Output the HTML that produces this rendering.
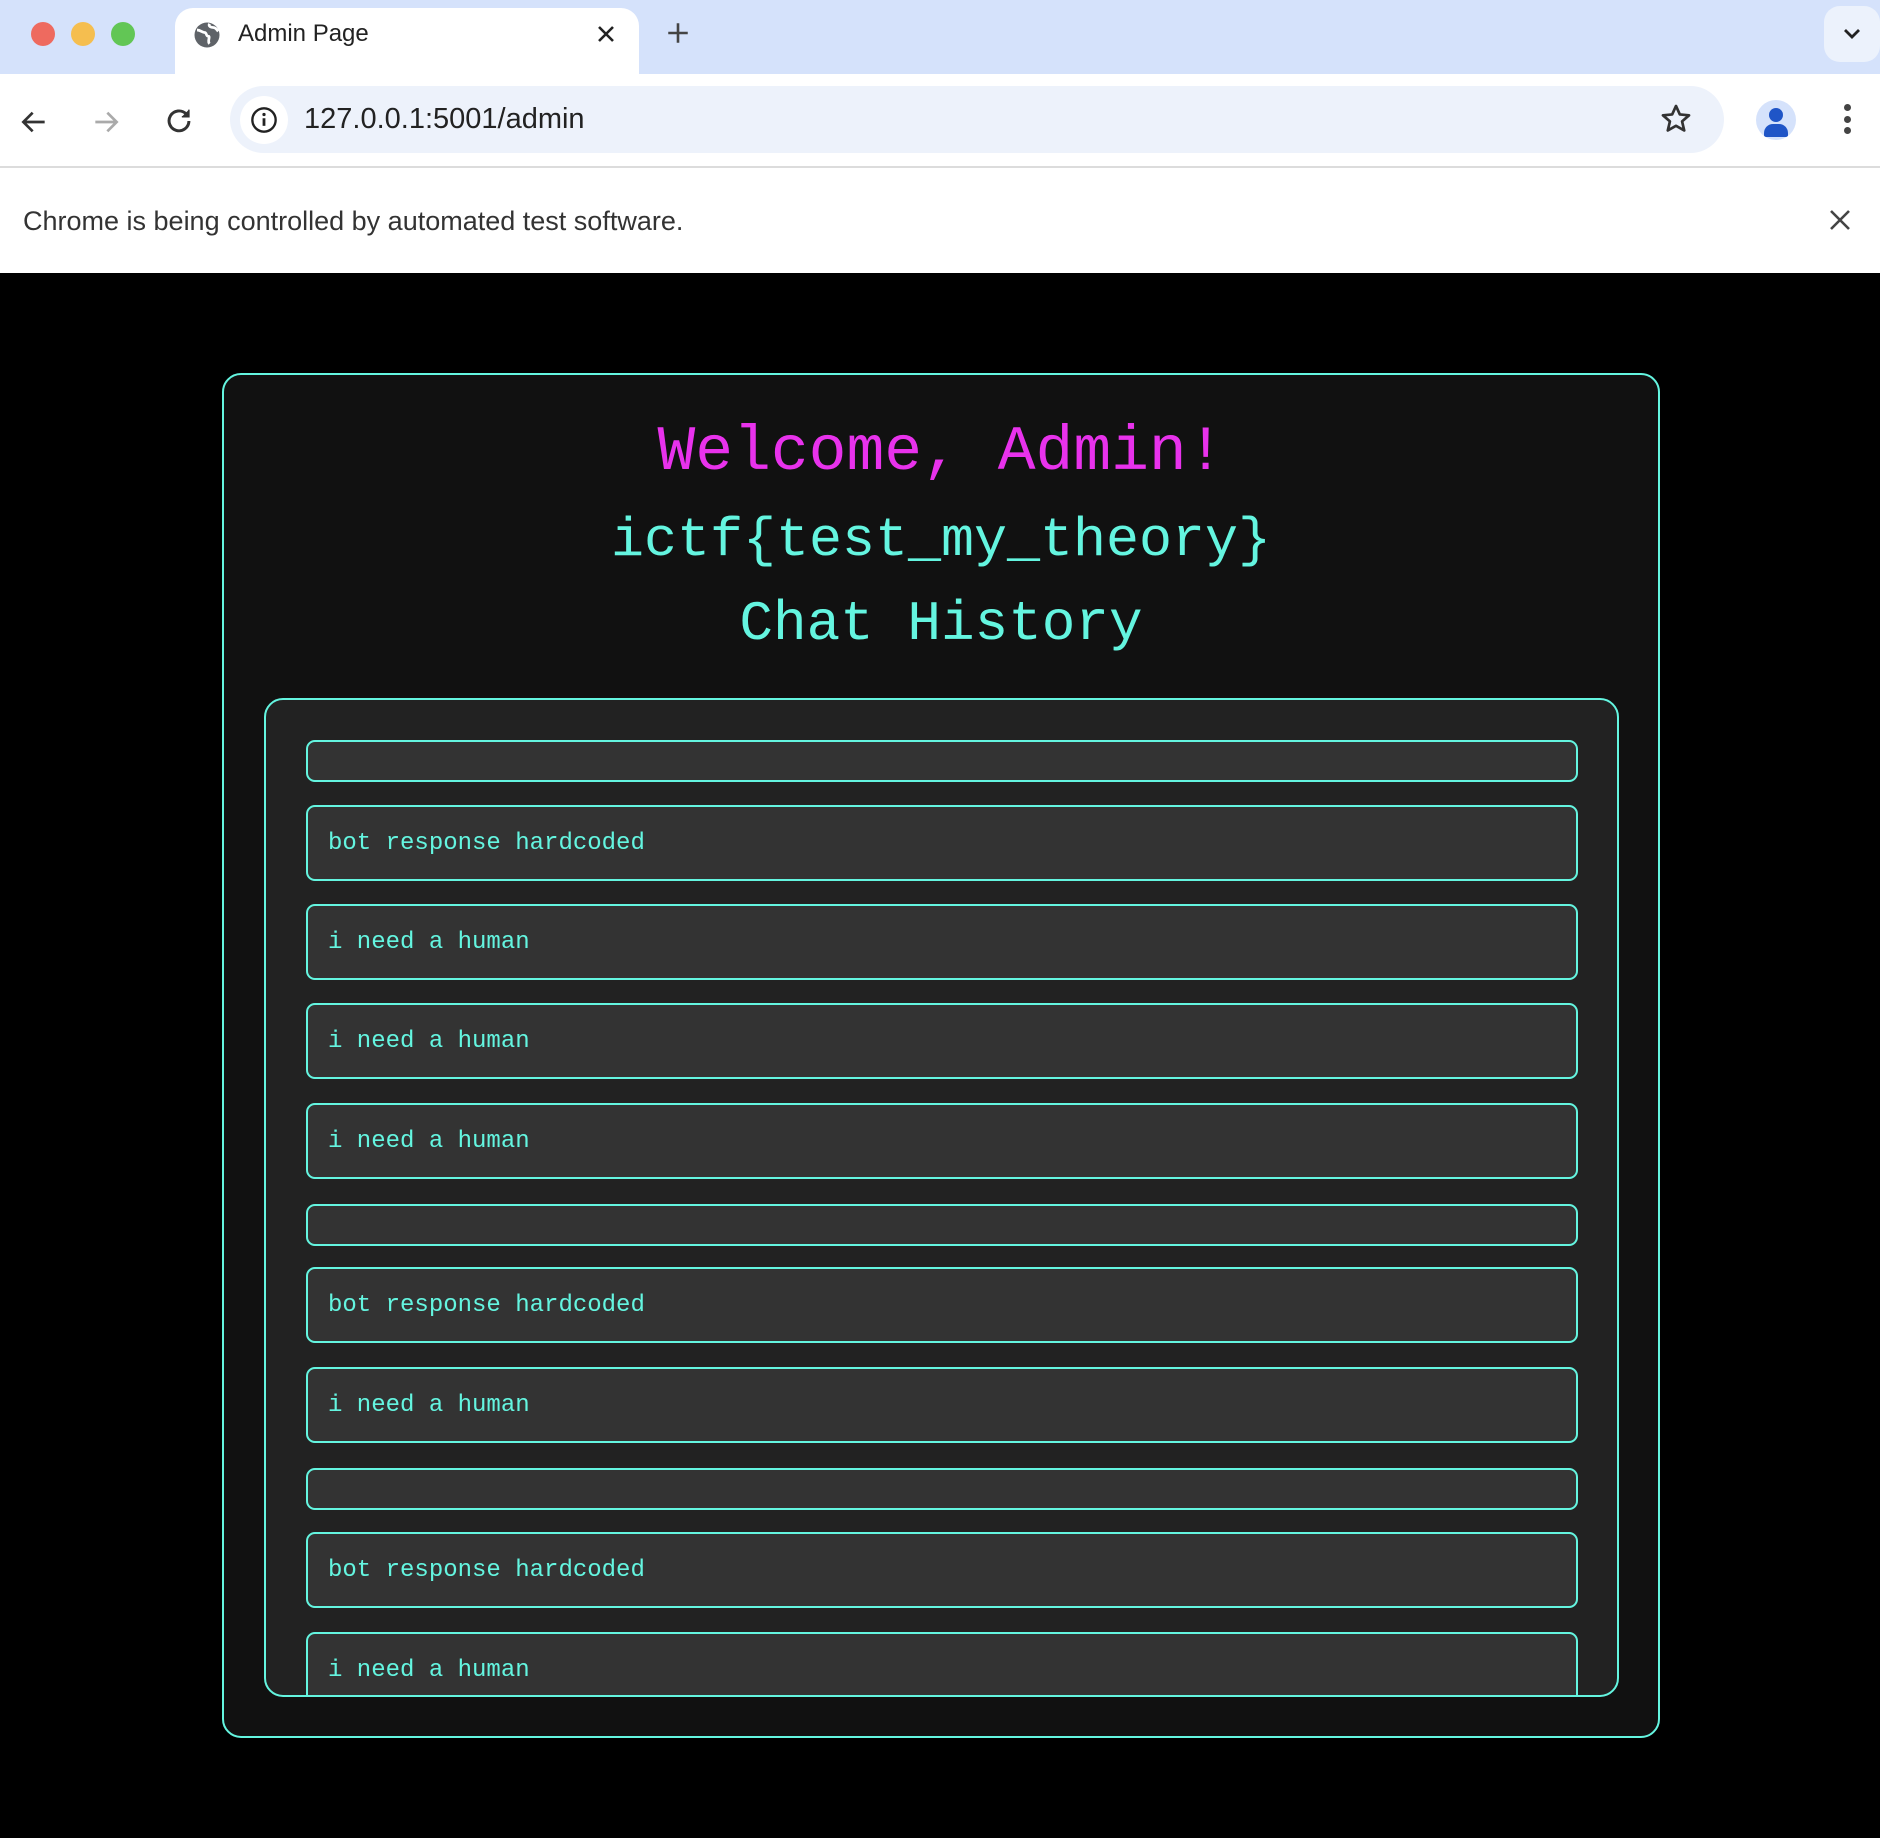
<!DOCTYPE html>
<html><head><meta charset="utf-8"><style>
*{margin:0;padding:0;box-sizing:border-box}
body{width:1880px;height:1838px;background:#000;overflow:hidden;position:relative;font-family:"Liberation Sans",sans-serif}
.abs{position:absolute}
#tabbar{left:0;top:0;width:1880px;height:74px;background:#d5e2fb}
#tab{left:175px;top:8px;width:464px;height:70px;background:#fff;border-radius:18px 18px 0 0}
#toolbar{left:0;top:74px;width:1880px;height:94px;background:#fff;border-bottom:2px solid #dcdcdc}
#url{left:230px;top:86px;width:1494px;height:67px;background:#edf2fb;border-radius:34px}
#info{left:0;top:168px;width:1880px;height:105px;background:#fff}
.cy{color:#64f5e0}
#outer{left:222px;top:373px;width:1438px;height:1365px;background:#111;border:2px solid #64f5e0;border-radius:19px}
h{position:absolute;left:0;width:100%;text-align:center;font-family:"Liberation Mono",monospace;white-space:nowrap}
#inner{left:264px;top:698px;width:1355px;height:999px;background:#222;border:2px solid #64f5e0;border-radius:19px;overflow:hidden}
.m{position:absolute;left:40px;width:1272px;background:#333;border:2px solid #64f5e0;border-radius:9px;font-family:"Liberation Mono",monospace;font-size:24px;color:#64f5e0;padding:0 20px;line-height:74px;height:76px}
.e{height:42px}
</style></head><body>
<div id="tabbar" class="abs"></div>
<div class="abs" style="left:31px;top:22px;width:24px;height:24px;border-radius:50%;background:#ee6a5f"></div>
<div class="abs" style="left:71px;top:22px;width:24px;height:24px;border-radius:50%;background:#f5be4f"></div>
<div class="abs" style="left:111px;top:22px;width:24px;height:24px;border-radius:50%;background:#62c655"></div>
<div id="tab" class="abs"></div>
<svg class="abs" style="left:192px;top:20px" width="30" height="30" viewBox="0 0 24 24"><circle cx="12" cy="12" r="10" fill="#5f6368"/><path d="M4 8c3 0 4 2 6 2s1 3 3 3-1 4 1 6M14 3c-1 2 1 3 3 3s3 2 4 3" stroke="#fff" stroke-width="2.2" fill="none"/></svg>
<div class="abs" style="left:238px;top:20px;font-size:24px;color:#222">Admin Page</div>
<svg class="abs" style="left:594px;top:22px" width="24" height="24" viewBox="0 0 24 24"><path d="M5 5L19 19M19 5L5 19" stroke="#222" stroke-width="2.6"/></svg>
<svg class="abs" style="left:665px;top:20px" width="26" height="26" viewBox="0 0 24 24"><path d="M12 3V21M3 12H21" stroke="#444" stroke-width="2.4"/></svg>
<div class="abs" style="left:1824px;top:6px;width:56px;height:56px;background:#ecf2fc;border-radius:16px"></div>
<svg class="abs" style="left:1840px;top:22px" width="24" height="24" viewBox="0 0 24 24"><path d="M5 8l7 7 7-7" stroke="#222" stroke-width="2.8" fill="none"/></svg>
<div id="toolbar" class="abs"></div>
<svg class="abs" style="left:18px;top:106px" width="32" height="32" viewBox="0 0 24 24"><path d="M20 12H5M11 5l-7 7 7 7" stroke="#333" stroke-width="2" fill="none"/></svg>
<svg class="abs" style="left:90px;top:106px" width="32" height="32" viewBox="0 0 24 24"><path d="M4 12H19M13 5l7 7-7 7" stroke="#aaa" stroke-width="2" fill="none"/></svg>
<svg class="abs" style="left:162px;top:104px" width="34" height="34" viewBox="0 0 24 24"><path d="M19 12a7 7 0 1 1-2-5" stroke="#333" stroke-width="2.1" fill="none"/><path d="M19 4v5h-5" fill="#333" stroke="#333" stroke-width="1"/></svg>
<div id="url" class="abs"></div>
<div class="abs" style="left:240px;top:96px;width:48px;height:48px;border-radius:50%;background:#fff"></div>
<svg class="abs" style="left:250px;top:106px" width="28" height="28" viewBox="0 0 24 24"><circle cx="12" cy="12" r="10" stroke="#222" stroke-width="2" fill="none"/><path d="M12 10.5V17" stroke="#222" stroke-width="2.4"/><circle cx="12" cy="7.3" r="1.4" fill="#222"/></svg>
<div class="abs" style="left:304px;top:103px;font-size:29px;color:#222">127.0.0.1:5001/admin</div>
<svg class="abs" style="left:1659px;top:102px" width="34" height="34" viewBox="0 0 24 24"><path d="M12 2.8l2.7 6 6.5.6-4.9 4.3 1.5 6.4L12 16.8 6.2 20.1l1.5-6.4L2.8 9.4l6.5-.6z" stroke="#333" stroke-width="1.9" fill="none" stroke-linejoin="round"/></svg>
<div class="abs" style="left:1756px;top:100px;width:40px;height:40px;border-radius:50%;background:#d5e2fb;overflow:hidden">
<div class="abs" style="left:13px;top:8px;width:14px;height:14px;border-radius:50%;background:#1f55c7"></div>
<div class="abs" style="left:8px;top:24px;width:24px;height:13px;border-radius:9px 9px 2px 2px;background:#1f55c7"></div></div>
<div class="abs" style="left:1844px;top:104px;width:7px;height:7px;border-radius:50%;background:#444"></div>
<div class="abs" style="left:1844px;top:116px;width:7px;height:7px;border-radius:50%;background:#444"></div>
<div class="abs" style="left:1844px;top:127px;width:7px;height:7px;border-radius:50%;background:#444"></div>
<div id="info" class="abs"></div>
<div class="abs" style="left:23px;top:206px;font-size:27px;color:#333">Chrome is being controlled by automated test software.</div>
<svg class="abs" style="left:1828px;top:208px" width="24" height="24" viewBox="0 0 24 24"><path d="M3 3L21 21M21 3L3 21" stroke="#444" stroke-width="2.6"/></svg>

<div id="outer" class="abs">
<h style="top:38px;font-size:63px;color:#e832ec;line-height:80px">Welcome, Admin!</h>
<h class="cy" style="top:126px;font-size:55px;line-height:80px;color:#64f5e0">ictf{test_my_theory}</h>
<h class="cy" style="top:209px;font-size:56px;line-height:80px;color:#64f5e0">Chat History</h>
</div>
<div id="inner" class="abs">
<div class="m e" style="top:40px"></div>
<div class="m" style="top:105px">bot response hardcoded</div>
<div class="m" style="top:204px">i need a human</div>
<div class="m" style="top:303px">i need a human</div>
<div class="m" style="top:403px">i need a human</div>
<div class="m e" style="top:504px"></div>
<div class="m" style="top:567px">bot response hardcoded</div>
<div class="m" style="top:667px">i need a human</div>
<div class="m e" style="top:768px"></div>
<div class="m" style="top:832px">bot response hardcoded</div>
<div class="m" style="top:932px">i need a human</div>
</div>
</body></html>
